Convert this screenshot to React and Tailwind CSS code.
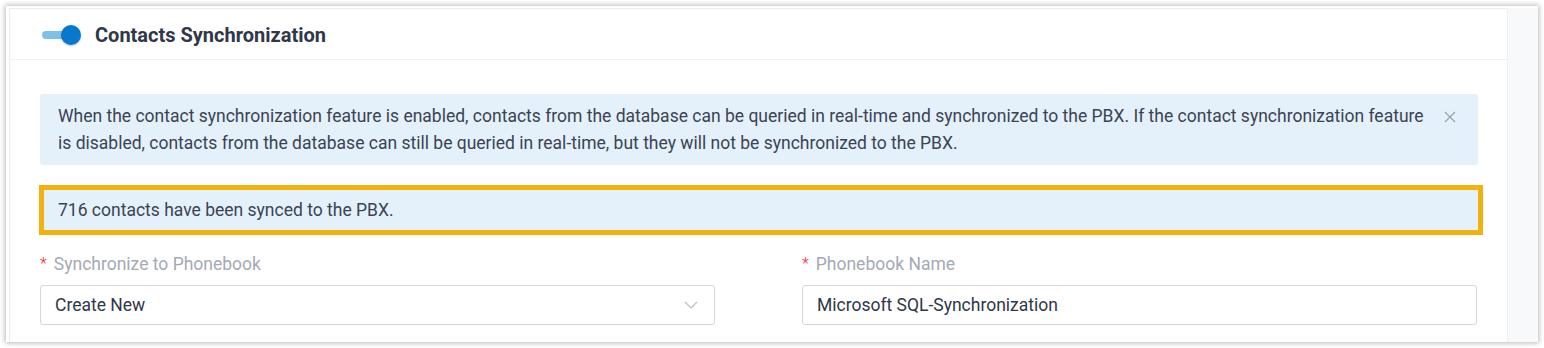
import React from "react";

export default function App() {
  return (
    <div className="w-[1544px] h-[348px] bg-white pt-[6px] pl-[6px]" style={{ fontFamily: "Roboto, 'Liberation Sans', sans-serif" }}>
      <div className="w-[1532px] h-[336px] bg-white shadow-[0_0_5px_1px_rgba(0,0,0,0.28)] flex pt-[2px] pl-[3px]">
        <div className="w-[1498px] h-full border-l border-t border-[#e9ebef] bg-white flex flex-col">
          {/* header */}
          <div className="h-[51px] flex items-center pl-[32px] border-b border-[#eef0f3] pt-[2px]">
            <div className="relative w-[40px] h-[22px] flex items-center">
              <div className="w-[32px] h-[8px] rounded-full bg-[#7fc0e6]" />
              <div className="absolute left-[19px] top-[1px] w-[20px] h-[20px] rounded-full bg-[#0679cf] shadow-[0_1px_2px_rgba(0,0,0,0.25)]" />
            </div>
            <div className="ml-[13px] text-[20px] font-bold text-[#2f3749] leading-none">Contacts Synchronization</div>
          </div>
          <div className="pl-[30px] pr-[29px] pt-[34px]">
            <div className="h-[71px] bg-[#e4f1fa] rounded-[3px] flex pl-[18px] pr-[22px] pt-[9px]">
              <p className="text-[17.5px] leading-[27px] text-[#3b4353] flex-1">
                When the contact synchronization feature is enabled, contacts from the database can be queried in real-time and synchronized to the PBX. If the contact synchronization feature is disabled, contacts from the database can still be queried in real-time, but they will not be synchronized to the PBX.
              </p>
              <svg width="12" height="12" viewBox="0 0 12 12" className="mt-[8px] ml-[14px]">
                <path d="M1 1 L11 11 M11 1 L1 11" stroke="#9a9ea7" strokeWidth="1.1" fill="none" />
              </svg>
            </div>
            <div className="mt-[20px] -ml-[1px] -mr-[5px] h-[50px] border-[5px] border-[#f1b20e] bg-[#e4f1fa] flex items-center pl-[14px]">
              <span className="text-[17.5px] text-[#3b4353]">716 contacts have been synced to the PBX.</span>
            </div>
            <div className="mt-[15px] flex gap-[87px]">
              <div className="w-[675px]">
                <div className="h-[28px] flex items-center">
                  <span className="text-[#f5222d] mr-[7px] text-[16px] font-light">*</span>
                  <span className="text-[#a4a9b7] text-[17.5px]">Synchronize to Phonebook</span>
                </div>
                <div className="mt-[7px] h-[40px] border border-[#d5d7e0] rounded-[3px] flex items-center pl-[14px] pr-[16px]">
                  <span className="flex-1 text-[17.5px] text-[#2f3749]">Create New</span>
                  <svg width="14" height="8" viewBox="0 0 14 8">
                    <path d="M1 1 L7 7 L13 1" stroke="#b8bcc6" strokeWidth="1.2" fill="none" />
                  </svg>
                </div>
              </div>
              <div className="w-[675px]">
                <div className="h-[28px] flex items-center">
                  <span className="text-[#f5222d] mr-[7px] text-[16px] font-light">*</span>
                  <span className="text-[#a4a9b7] text-[17.5px]">Phonebook Name</span>
                </div>
                <div className="mt-[7px] h-[40px] border border-[#d5d7e0] rounded-[3px] flex items-center pl-[14px]">
                  <span className="text-[17.5px] text-[#2f3749]">Microsoft SQL-Synchronization</span>
                </div>
              </div>
            </div>
          </div>
        </div>
        <div className="flex-1 h-full bg-[#f8f9fb] border-l border-[#eef0f3]" />
      </div>
    </div>
  );
}
